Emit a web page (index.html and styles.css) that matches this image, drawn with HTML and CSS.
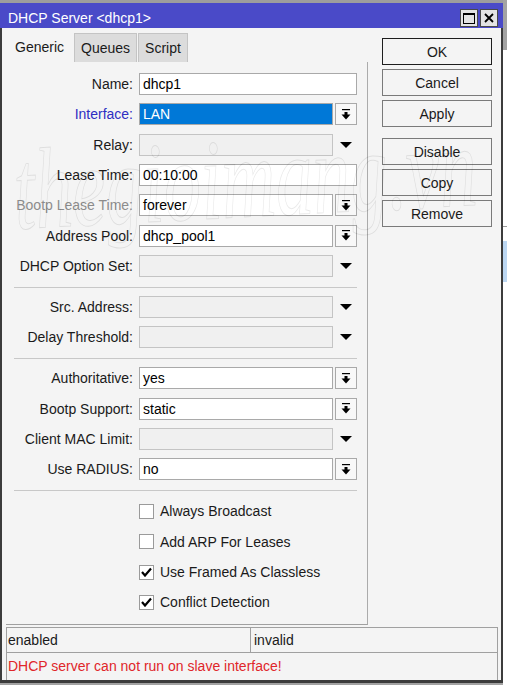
FILE: index.html
```html
<!DOCTYPE html>
<html lang="en">
<head>
    <meta charset="UTF-8">
    <meta name="viewport" content="width=device-width, initial-scale=1.0">
    <title>DHCP Server &lt;dhcp1&gt;</title>
    <link rel="stylesheet" href="styles.css">
</head>
<body>

    <div class="screen">
        <div class="window">
            <div class="title-bar">
                <span class="title-text">DHCP Server &lt;dhcp1&gt;</span>
                <div class="title-buttons">
                    <span class="title-btn">
                        <svg width="12" height="11" viewBox="0 0 12 11"><rect x="0.5" y="0.5" width="11" height="10" fill="none" stroke="#000"/><rect x="0" y="0" width="12" height="2" fill="#000"/></svg>
                    </span>
                    <span class="title-btn">
                        <svg width="10" height="10" viewBox="0 0 10 10"><path d="M1 1 L9 9 M9 1 L1 9" stroke="#000" stroke-width="1.8"/></svg>
                    </span>
                </div>
            </div>

            <div class="window-body">
                <div class="main">
                    <div class="form-area">
                        <div class="tabs">
                            <span class="tab active">Generic</span>
                            <span class="tab">Queues</span>
                            <span class="tab">Script</span>
                        </div>

                        <div class="panel">
                            <div class="section">
                                <div class="row">
                                    <span class="label">Name:</span>
                                    <div class="field"><span class="input">dhcp1</span></div>
                                </div>
                                <div class="row">
                                    <span class="label linked">Interface:</span>
                                    <div class="field"><span class="input selected">LAN</span><span class="drop-btn"></span></div>
                                </div>
                                <div class="row">
                                    <span class="label">Relay:</span>
                                    <div class="field"><span class="input empty"></span><span class="drop-arrow"></span></div>
                                </div>
                                <div class="row">
                                    <span class="label">Lease Time:</span>
                                    <div class="field"><span class="input">00:10:00</span></div>
                                </div>
                                <div class="row">
                                    <span class="label disabled">Bootp Lease Time:</span>
                                    <div class="field"><span class="input">forever</span><span class="drop-btn"></span></div>
                                </div>
                                <div class="row">
                                    <span class="label">Address Pool:</span>
                                    <div class="field"><span class="input">dhcp_pool1</span><span class="drop-btn"></span></div>
                                </div>
                                <div class="row">
                                    <span class="label">DHCP Option Set:</span>
                                    <div class="field"><span class="input empty"></span><span class="drop-arrow"></span></div>
                                </div>
                            </div>

                            <div class="section">
                                <div class="row">
                                    <span class="label">Src. Address:</span>
                                    <div class="field"><span class="input empty"></span><span class="drop-arrow"></span></div>
                                </div>
                                <div class="row">
                                    <span class="label">Delay Threshold:</span>
                                    <div class="field"><span class="input empty"></span><span class="drop-arrow"></span></div>
                                </div>
                            </div>

                            <div class="section">
                                <div class="row">
                                    <span class="label">Authoritative:</span>
                                    <div class="field"><span class="input">yes</span><span class="drop-btn"></span></div>
                                </div>
                                <div class="row">
                                    <span class="label">Bootp Support:</span>
                                    <div class="field"><span class="input">static</span><span class="drop-btn"></span></div>
                                </div>
                                <div class="row">
                                    <span class="label">Client MAC Limit:</span>
                                    <div class="field"><span class="input empty"></span><span class="drop-arrow"></span></div>
                                </div>
                                <div class="row">
                                    <span class="label">Use RADIUS:</span>
                                    <div class="field"><span class="input">no</span><span class="drop-btn"></span></div>
                                </div>
                            </div>

                            <div class="section">
                                <div class="row">
                                    <span></span>
                                    <label class="check"><span class="box"></span>Always Broadcast</label>
                                </div>
                                <div class="row">
                                    <span></span>
                                    <label class="check"><span class="box"></span>Add ARP For Leases</label>
                                </div>
                                <div class="row">
                                    <span></span>
                                    <label class="check"><span class="box checked"></span>Use Framed As Classless</label>
                                </div>
                                <div class="row">
                                    <span></span>
                                    <label class="check"><span class="box checked"></span>Conflict Detection</label>
                                </div>
                            </div>
                        </div>
                    </div>

                    <div class="actions">
                        <button class="action-btn default">OK</button>
                        <button class="action-btn">Cancel</button>
                        <button class="action-btn">Apply</button>
                        <button class="action-btn spaced">Disable</button>
                        <button class="action-btn">Copy</button>
                        <button class="action-btn">Remove</button>
                    </div>
                </div>

                <div class="status">
                    <div class="status-row">
                        <span class="status-cell">enabled</span>
                        <span class="status-cell">invalid</span>
                    </div>
                    <div class="message">DHCP server can not run on slave interface!</div>
                </div>

                <div class="watermark">thegioimang.vn</div>
            </div>
        </div>

        <div class="behind">
            <div class="behind-top"></div>
            <div class="behind-line"></div>
            <div class="behind-sel"></div>
            <div class="behind-rest"></div>
        </div>
    </div>

    <script>
        // same two small icons are reused on every combo field
        const dropBtnIcon = '<svg width="10" height="11" viewBox="0 0 10 11"><rect x="1" y="0" width="8" height="1.2" fill="#000"/><rect x="3.5" y="3" width="3" height="3" fill="#000"/><polygon points="0.5,5.5 9.5,5.5 5,10.5" fill="#000"/></svg>';
        const dropArrowIcon = '<svg width="12" height="6" viewBox="0 0 12 6"><polygon points="0,0 12,0 6,6" fill="#000"/></svg>';
        const checkIcon = '<svg width="11" height="10" viewBox="0 0 11 10"><path d="M1 5 L4 8.5 L10 1.5" fill="none" stroke="#000" stroke-width="2.2"/></svg>';

        document.querySelectorAll(".drop-btn").forEach(el => el.innerHTML = dropBtnIcon);
        document.querySelectorAll(".drop-arrow").forEach(el => el.innerHTML = dropArrowIcon);
        document.querySelectorAll(".box.checked").forEach(el => el.innerHTML = checkIcon);
    </script>

</body>
</html>
```

FILE: styles.css
```css
html, body {
    margin: 0;
    padding: 0;
    height: 100%;
    overflow: hidden;
}

body {
    background: #a3a3a3;
    font-family: "Liberation Sans", Arial, sans-serif;
    font-size: 14px;
    color: #1a1a1a;
}

.screen {
    display: flex;
    height: 685px;
}

.window {
    width: 503px;
    display: flex;
    flex-direction: column;
    border-top: 3px solid #9d9d9d;
}

.title-bar {
    height: 25px;
    box-sizing: border-box;
    background: #4a4ac8;
    display: flex;
    justify-content: space-between;
    align-items: flex-start;
    padding: 6px 5px 0 8px;
}

.title-text {
    color: #fff;
    line-height: 18px;
}

.title-buttons {
    display: flex;
    gap: 2px;
}

.title-btn {
    width: 18px;
    height: 18px;
    box-sizing: border-box;
    border: 1px solid #4a4a4a;
    background: #e4e4e4;
    display: flex;
    align-items: center;
    justify-content: center;
}

.window-body {
    position: relative;
    height: 655px;
    box-sizing: border-box;
    background: #f4f4f4;
    border-left: 2px solid #3c3c3c;
    border-right: 2px solid #3c3c3c;
    border-bottom: 3px solid #3c3c3c;
    display: flex;
    flex-direction: column;
    overflow: hidden;
}

.main {
    display: flex;
    flex: 1;
}

.form-area {
    width: 362px;
    margin-left: 4px;
    padding-top: 4px;
    display: flex;
    flex-direction: column;
}

.tabs {
    display: flex;
    height: 30px;
    gap: 1px;
    margin-left: 2px;
}

.tab {
    padding: 0 6px;
    margin-top: 1px;
    line-height: 28px;
    background: #dcdcdc;
    border: 1px solid #c4c4c4;
    border-bottom: none;
}

.tab.active {
    background: transparent;
    border: none;
    margin-top: 0;
    padding: 0 9px 0 7px;
    line-height: 30px;
}

.panel {
    flex: 1;
    margin-bottom: 2px;
    border-right: 1px solid #ababab;
    border-bottom: 1px solid #a0a0a0;
}

.section {
    display: flex;
    flex-direction: column;
    gap: 8.35px;
    margin: 0 10px 0 8px;
    padding: 8px 0 10px;
    border-bottom: 1px solid #c8c8c8;
}

.section:first-child {
    padding-top: 11px;
}

.section:last-child {
    border-bottom: none;
    padding-top: 9px;
}

.row {
    display: grid;
    grid-template-columns: 119px 1fr;
    column-gap: 6px;
    align-items: center;
    height: 22px;
}

.label {
    text-align: right;
    white-space: nowrap;
}

.label.linked {
    color: #2e2ec2;
}

.label.disabled {
    color: #8c8c8c;
}

.field {
    display: flex;
    gap: 2px;
    height: 22px;
}

.input {
    flex: 1;
    height: 22px;
    box-sizing: border-box;
    border: 1px solid #a9a9a9;
    background: #fff;
    padding: 0 3px;
    line-height: 20px;
    color: #000;
}

.input.empty {
    background: #f0f0f0;
    border-color: #c4c4c4;
}

.input.selected {
    background: #0078d7;
    color: #fff;
}

.drop-btn {
    width: 22px;
    height: 22px;
    box-sizing: border-box;
    border: 1px solid #a9a9a9;
    background: #f8f8f8;
    display: flex;
    align-items: center;
    justify-content: center;
}

.drop-arrow {
    width: 22px;
    display: flex;
    align-items: center;
    justify-content: center;
}

.check {
    display: flex;
    align-items: center;
    gap: 6px;
}

.box {
    width: 15px;
    height: 15px;
    box-sizing: border-box;
    border: 1px solid #9a9a9a;
    background: #fff;
    display: flex;
    align-items: center;
    justify-content: center;
}

.actions {
    width: 110px;
    margin-left: 14px;
    padding-top: 10px;
    display: flex;
    flex-direction: column;
    gap: 4px;
}

.action-btn {
    height: 27px;
    box-sizing: border-box;
    border: 1px solid #7a7a7a;
    background: #f4f4f4;
    font: inherit;
    color: #1a1a1a;
    padding: 0;
}

.action-btn.default {
    border-color: #1e1e1e;
}

.action-btn.spaced {
    margin-top: 7px;
}

.status {
    margin: 0 3px 0 4px;
    border: 1px solid #a0a0a0;
    border-bottom: none;
}

.status-row {
    display: grid;
    grid-template-columns: 243px 1fr;
    height: 25px;
    box-sizing: border-box;
    border-bottom: 1px solid #a0a0a0;
}

.status-cell {
    padding: 0 1px;
    line-height: 24px;
}

.status-cell + .status-cell {
    border-left: 1px solid #a0a0a0;
    padding-left: 3px;
}

.message {
    height: 27px;
    line-height: 27px;
    padding-left: 1px;
    color: #e0262a;
}

.watermark {
    position: absolute;
    left: 12px;
    top: 105px;
    font-family: "Liberation Serif", serif;
    font-style: italic;
    font-size: 115px;
    line-height: 1;
    white-space: nowrap;
    color: transparent;
    -webkit-text-stroke: 1px rgba(0, 0, 0, 0.09);
    transform-origin: left center;
    transform: rotate(-3deg) scaleX(0.65);
    pointer-events: none;
}

.behind {
    flex: 1;
    display: flex;
    flex-direction: column;
    background: #fff;
}

.behind-top {
    height: 50px;
    background: #a3a3a3;
}

.behind-line {
    height: 1px;
    margin-top: 176px;
    background: #9a9a9a;
}

.behind-sel {
    height: 41px;
    margin-top: 14px;
    background: #bcd7f2;
}

.behind-rest {
    height: 336px;
}
```
